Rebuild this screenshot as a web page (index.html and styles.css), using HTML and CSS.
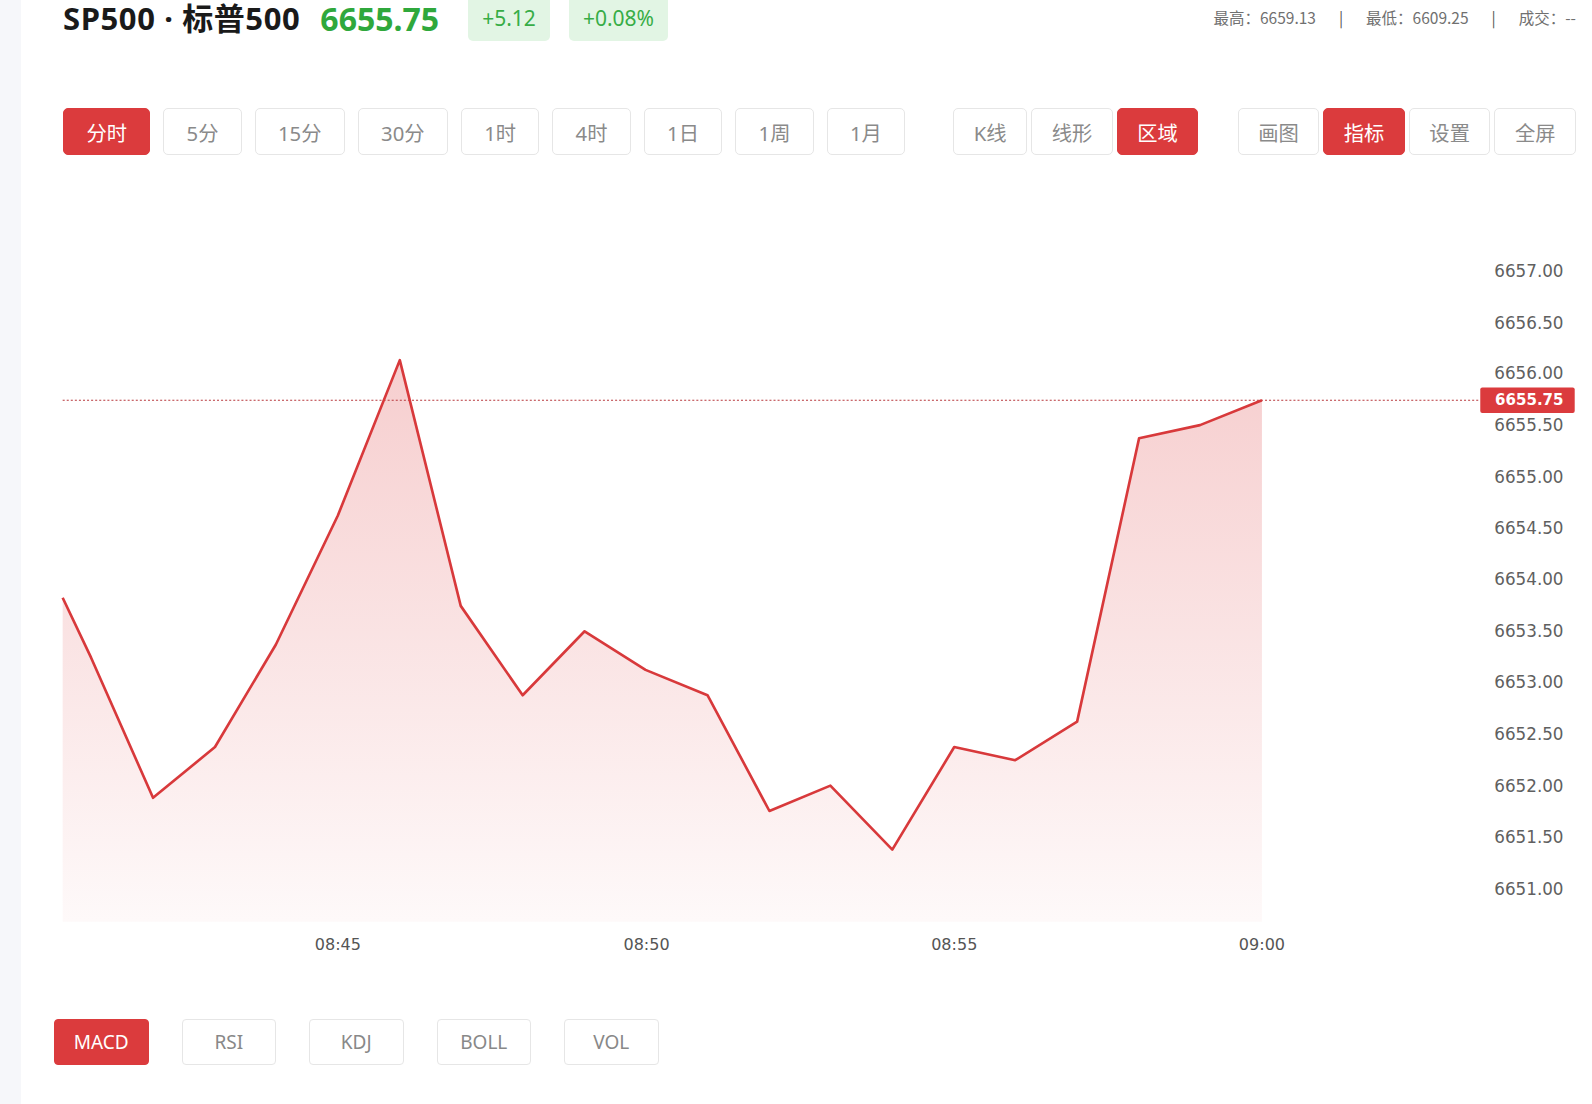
FILE: index.html
```html
<!DOCTYPE html>
<html lang="zh-CN">
<head>
    <meta charset="UTF-8">
    <meta name="viewport" content="width=device-width, initial-scale=1.0">
    <title>SP500 · 标普500</title>
    <link rel="stylesheet" href="styles.css">
</head>
<body>

    <div class="side-strip"></div>

    <div class="main">
        <div class="quote-header">
            <div class="quote-left">
                <h1 class="symbol">SP500 · 标普500</h1>
                <span class="price">6655.75</span>
                <span class="change-badge">+5.12</span>
                <span class="change-badge">+0.08%</span>
            </div>
            <div class="quote-stats">
                <span>最高：6659.13</span>
                <span class="sep">|</span>
                <span>最低：6609.25</span>
                <span class="sep">|</span>
                <span>成交：--</span>
            </div>
        </div>

        <div class="toolbar">
            <div class="btn-group periods">
                <button class="tool-btn active">分时</button>
                <button class="tool-btn">5分</button>
                <button class="tool-btn">15分</button>
                <button class="tool-btn">30分</button>
                <button class="tool-btn">1时</button>
                <button class="tool-btn">4时</button>
                <button class="tool-btn">1日</button>
                <button class="tool-btn">1周</button>
                <button class="tool-btn">1月</button>
            </div>
            <div class="btn-group compact chart-types">
                <button class="tool-btn">K线</button>
                <button class="tool-btn">线形</button>
                <button class="tool-btn active">区域</button>
            </div>
            <div class="btn-group compact actions">
                <button class="tool-btn">画图</button>
                <button class="tool-btn active">指标</button>
                <button class="tool-btn">设置</button>
                <button class="tool-btn">全屏</button>
            </div>
        </div>

        <div class="chart">
            <svg class="chart-svg" viewBox="21 152 1547 807.5" width="1571" height="820">
                <defs>
                    <linearGradient id="areaFill" gradientUnits="userSpaceOnUse" x1="0" y1="354" x2="0" y2="907">
                        <stop offset="0" stop-color="#dc3b3d" stop-opacity="0.25"/>
                        <stop offset="1" stop-color="#dc3b3d" stop-opacity="0.03"/>
                    </linearGradient>
                </defs>

                <path class="area" d="M62 588 L90 647 L151 785 L212 735 L272 634 L333 507 L394 354 L454 596 L515 684 L576 621 L636 659 L697 684 L758 798 L818 773 L879 836 L940 735 L1000 748 L1061 710 L1122 431 L1182 418 L1243 393.5 L1243 907 L62 907 Z"/>

                <line class="last-line" x1="62" y1="393.5" x2="1458" y2="393.5"/>

                <polyline class="price-line" points="62,588 90,647 151,785 212,735 272,634 333,507 394,354 454,596 515,684 576,621 636,659 697,684 758,798 818,773 879,836 940,735 1000,748 1061,710 1122,431 1182,418 1243,393.5"/>

                <g class="y-axis">
                    <text x="1540" y="267">6657.00</text>
                    <text x="1540" y="318">6656.50</text>
                    <text x="1540" y="368">6656.00</text>
                    <text x="1540" y="419">6655.50</text>
                    <text x="1540" y="470">6655.00</text>
                    <text x="1540" y="520">6654.50</text>
                    <text x="1540" y="571">6654.00</text>
                    <text x="1540" y="622">6653.50</text>
                    <text x="1540" y="672">6653.00</text>
                    <text x="1540" y="723">6652.50</text>
                    <text x="1540" y="774">6652.00</text>
                    <text x="1540" y="825">6651.50</text>
                    <text x="1540" y="876">6651.00</text>
                </g>

                <rect class="last-tag" x="1458" y="381" width="93" height="25" rx="2"/>
                <text class="last-tag-text" x="1540" y="394">6655.75</text>

                <g class="x-axis">
                    <text x="333" y="930">08:45</text>
                    <text x="637" y="930">08:50</text>
                    <text x="940" y="930">08:55</text>
                    <text x="1243" y="930">09:00</text>
                </g>
            </svg>
        </div>

        <div class="indicators">
            <button class="ind-btn active">MACD</button>
            <button class="ind-btn">RSI</button>
            <button class="ind-btn">KDJ</button>
            <button class="ind-btn">BOLL</button>
            <button class="ind-btn">VOL</button>
        </div>
    </div>

</body>
</html>
```

FILE: styles.css
```css
body {
    margin: 0;
    display: flex;
    min-height: 100vh;
    overflow: hidden;
    background: #fff;
    font-family: "Noto Sans", "Noto Sans CJK SC", sans-serif;
    color: #333;
}

.side-strip {
    width: 21px;
    flex-shrink: 0;
    background: #f6f7fa;
}

.main {
    flex: 1;
    min-width: 0;
    padding: 0 16px 0 42px;
}

/* header */

.quote-header {
    display: flex;
    justify-content: space-between;
    align-items: flex-start;
    height: 41px;
}

.quote-left {
    display: flex;
    align-items: flex-start;
}

.symbol {
    margin: 0 20px 0 0;
    line-height: 37px;
    font-family: "Noto Sans", "Noto Sans CJK SC", sans-serif;
    font-size: 31px;
    font-weight: 700;
    color: #1a1a1a;
    letter-spacing: 0.6px;
}

.price {
    margin-right: 29px;
    line-height: 37px;
    font-family: "Noto Sans", sans-serif;
    font-size: 32px;
    font-weight: 700;
    color: #2fa83c;
}

.change-badge {
    display: flex;
    align-items: center;
    justify-content: center;
    height: 41px;
    padding: 0 14px 5px;
    box-sizing: border-box;
    margin-right: 19px;
    font-size: 21px;
    color: #37ad46;
    background: #e2f5e4;
    border-radius: 0 0 5px 5px;
}

.quote-stats {
    display: flex;
    gap: 23px;
    margin-top: 6px;
    font-family: "Noto Sans CJK SC", sans-serif;
    font-size: 15.5px;
    color: #707070;
}

.quote-stats .sep {
    color: #555;
}

/* toolbar */

.toolbar {
    display: flex;
    margin-top: 67px;
}

.btn-group {
    display: flex;
    gap: 12.8px;
}

.btn-group.compact {
    gap: 4px;
}

.chart-types {
    margin-left: 48px;
}

.actions {
    margin-left: auto;
}

.tool-btn {
    height: 47px;
    padding: 0 22.4px;
    font-family: "Noto Sans", "Noto Sans CJK SC", sans-serif;
    font-size: 20.3px;
    color: #8a8a8a;
    background: #fff;
    border: 1px solid #e6e6e6;
    border-radius: 5px;
    cursor: pointer;
}

.compact .tool-btn {
    padding: 0 19.5px;
}

.tool-btn.active,
.ind-btn.active {
    color: #fff;
    background: #db3b3d;
    border-color: #db3b3d;
}

/* chart */

.chart {
    margin: 0 -16px 0 -42px;
    height: 820px;
}

.chart-svg {
    display: block;
}

.area {
    fill: url(#areaFill);
}

.price-line {
    fill: none;
    stroke: #d8393b;
    stroke-width: 2.6;
    stroke-linejoin: round;
}

.last-line {
    stroke: #b8383d;
    stroke-width: 1;
    stroke-dasharray: 2 2;
}

.y-axis text {
    font-family: "DejaVu Sans", sans-serif;
    font-size: 16.5px;
    fill: #606060;
    text-anchor: end;
    dominant-baseline: middle;
}

.last-tag {
    fill: #db3b3d;
}

.last-tag-text {
    font-family: "DejaVu Sans", sans-serif;
    font-size: 14.8px;
    font-weight: 700;
    fill: #fff;
    text-anchor: end;
    dominant-baseline: middle;
}

.x-axis text {
    font-family: "DejaVu Sans", sans-serif;
    font-size: 15.8px;
    fill: #555;
    text-anchor: middle;
    dominant-baseline: middle;
}

/* indicator tabs */

.indicators {
    display: flex;
    gap: 33px;
    margin: 44px 0 0 -9px;
}

.ind-btn {
    width: 94.5px;
    height: 46px;
    font-family: "Noto Sans", sans-serif;
    font-size: 19px;
    color: #888;
    background: #fff;
    border: 1px solid #e6e6e6;
    border-radius: 4px;
    cursor: pointer;
}
```
